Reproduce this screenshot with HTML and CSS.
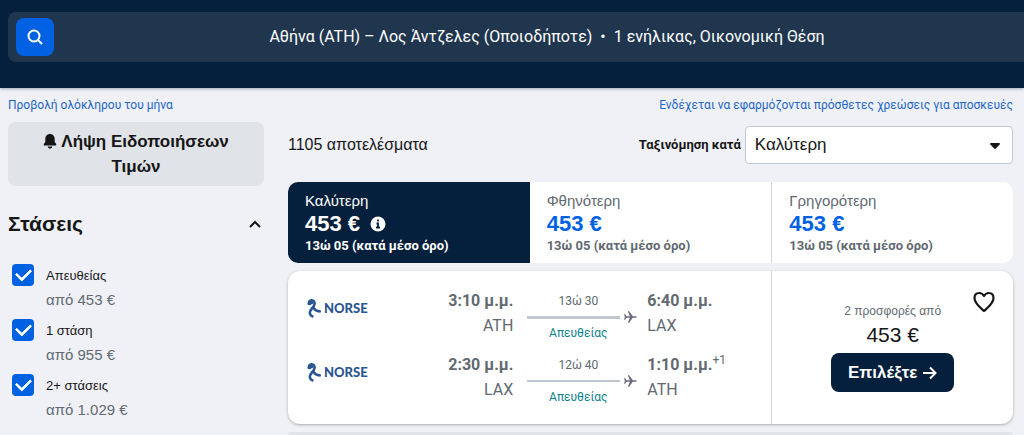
FILE: index.html
```html
<!DOCTYPE html>
<html lang="el">
<head>
<meta charset="utf-8">
<meta name="viewport" content="width=device-width, initial-scale=1">
<title>Αθήνα – Λος Άντζελες</title>
<link rel="stylesheet" href="styles.css">
</head>
<body>
<svg class="sprite" aria-hidden="true">
  <symbol id="plane" viewBox="0 0 14 14"><path d="M1 4.200h1L3.600 6.300h3.300L4.800 1.200h1.300l3.700 5.100h2.600c.8 0 1.200.4 1.200.7s-.4.700-1.200.7H9.800l-3.700 5.100H4.800l2.100-5.100H3.600L2 9.800H1L1.900 7z"/></symbol>
  <symbol id="norse" viewBox="0 0 14 19"><path d="M1.800 4.800C1.500 2 4 1 5.700 1.500c2.300.8 2.200 3.200 1.200 5.300C5.500 9.500 2.600 11 2.800 14c.1 1.700 1.200 2.700 2.600 3.400M2 5c1.400.2 1.800-1 2.800-1M6.300 8.700c1.300 2.200 3.400 3.700 6.500 3.700" fill="none" stroke="currentColor" stroke-width="2.600" stroke-linecap="round"/></symbol>
</svg>
<header class="header">
  <div class="search">
    <button class="search-button" type="button" aria-label="Αναζήτηση">
      <svg width="16" height="16" viewBox="0 0 16 16" fill="none" stroke="currentColor" stroke-width="2"><circle cx="7" cy="7" r="5.500"/><path d="M11 11l4 4"/></svg>
    </button>
    <p class="search-text">Αθήνα (ATH) – Λος Άντζελες (Οποιοδήποτε) <span class="dot">•</span> 1 ενήλικας, Οικονομική Θέση</p>
  </div>
</header>
<nav class="links">
  <a href="#month">Προβολή ολόκληρου του μήνα</a>
  <a href="#baggage">Ενδέχεται να εφαρμόζονται πρόσθετες χρεώσεις για αποσκευές</a>
</nav>
<div class="page">
  <aside class="sidebar">
    <button class="alerts" type="button"><svg class="bell" width="14" height="16" viewBox="0 0 14 16"><path fill="currentColor" d="M7 1C4 1 2.300 3.300 2.300 6v3L.8 11v1.500h12.400V11l-1.500-2V6C11.700 3.300 10 1 7 1zM4.700 13.500C5 15 6 15.500 7 15.500S9 15 9.300 13.500z"/></svg> Λήψη Ειδοποιήσεων Τιμών</button>
    <section class="filter">
      <h2 class="filter-title">Στάσεις
        <button class="collapse" type="button" aria-label="Σύμπτυξη"><svg width="12" height="8" viewBox="0 0 12 8" fill="none" stroke="currentColor" stroke-width="2"><path d="M1 7l5-5 5 5"/></svg></button>
      </h2>
      <label class="option"><input type="checkbox" checked><span class="option-name">Απευθείας</span><span class="option-price">από 453 €</span></label>
      <label class="option"><input type="checkbox" checked><span class="option-name">1 στάση</span><span class="option-price">από 955 €</span></label>
      <label class="option"><input type="checkbox" checked><span class="option-name">2+ στάσεις</span><span class="option-price">από 1.029 €</span></label>
    </section>
  </aside>
  <main class="results">
    <div class="toolbar">
      <p class="count">1105 αποτελέσματα</p>
      <label class="sort-label" for="sort">Ταξινόμηση κατά</label>
      <div class="sort">
        <select id="sort"><option>Καλύτερη</option><option>Φθηνότερη</option><option>Γρηγορότερη</option></select>
        <svg class="caret" width="12" height="8" viewBox="0 0 12 8"><path fill="currentColor" d="M2 1h8c1 0 1.300.9.700 1.500L6.800 6.600c-.5.500-1.100.500-1.600 0L1.300 2.500C.7 1.900 1 1 2 1z"/></svg>
      </div>
    </div>
    <div class="tabs">
      <button class="tab tab-active" type="button"><span class="tab-name">Καλύτερη</span><span class="tab-price">453 € <svg width="16" height="16" viewBox="0 0 16 16"><circle cx="8" cy="8" r="7.500" fill="currentColor"/><path d="M8 3.500v2M6.500 7.500H8V11M6 11.500h4" fill="none" stroke="#05203c" stroke-width="1.800"/></svg></span><span class="tab-time">13ώ 05 (κατά μέσο όρο)</span></button>
      <button class="tab" type="button"><span class="tab-name">Φθηνότερη</span><span class="tab-price">453 €</span><span class="tab-time">13ώ 05 (κατά μέσο όρο)</span></button>
      <button class="tab" type="button"><span class="tab-name">Γρηγορότερη</span><span class="tab-price">453 €</span><span class="tab-time">13ώ 05 (κατά μέσο όρο)</span></button>
    </div>
    <article class="card">
      <div class="legs">
        <div class="leg">
          <div class="airline"><svg width="14" height="19"><use href="#norse"/></svg>NORSE</div>
          <div class="stop depart"><span class="time">3:10 μ.μ.</span><span class="code">ATH</span></div>
          <div class="route"><span class="duration">13ώ 30</span><span class="track track-wide"></span><svg class="plane" width="14" height="14"><use href="#plane"/></svg><span class="direct">Απευθείας</span></div>
          <div class="stop"><span class="time">6:40 μ.μ.</span><span class="code">LAX</span></div>
        </div>
        <div class="leg">
          <div class="airline"><svg width="14" height="19"><use href="#norse"/></svg>NORSE</div>
          <div class="stop depart"><span class="time">2:30 μ.μ.</span><span class="code">LAX</span></div>
          <div class="route"><span class="duration">12ώ 40</span><span class="track"></span><svg class="plane" width="14" height="14"><use href="#plane"/></svg><span class="direct">Απευθείας</span></div>
          <div class="stop"><span class="time">1:10 μ.μ.<sup>+1</sup></span><span class="code">ATH</span></div>
        </div>
      </div>
      <div class="offer">
        <button class="save" type="button" aria-label="Αποθήκευση"><svg width="24" height="22" viewBox="0 0 24 22"><path d="M12 20C9.500 17.700 2.500 12.500 2.500 7.300 2.500 4 4.500 2 7.200 2c2.200 0 3.800 1.300 4.800 3 1-1.700 2.600-3 4.800-3 2.700 0 4.700 2 4.700 5.300C21.500 12.500 14.500 17.700 12 20z" fill="none" stroke="currentColor" stroke-width="2.200" stroke-linejoin="round"/></svg></button>
        <span class="offer-note">2 προσφορές από</span>
        <span class="offer-price">453 €</span>
        <button class="select" type="button">Επιλέξτε <svg width="14" height="14" viewBox="0 0 14 14" fill="none" stroke="currentColor" stroke-width="2"><path d="M0 7h12M7 1.500L12.500 7 7 12.500"/></svg></button>
      </div>
    </article>
    <article class="card next-card"></article>
  </main>
</div>
</body>
</html>
```
FILE: styles.css
```css
* { box-sizing: border-box; }
body {
  display: flex;
  flex-direction: column;
  margin: 0;
  min-height: 100vh;
  background: #eff1f6;
  color: #161616;
  font: 16px/24px "Liberation Sans", Arial, sans-serif;
}
p, h2 { margin: 0; }
button { border: 0; padding: 0; background: none; color: inherit; font: inherit; cursor: pointer; }
svg { display: block; flex: none; }
.sprite { position: absolute; width: 0; height: 0; }

.header { background: #05203c; padding: 12px 0 26px 8px; box-shadow: 0 1px 3px #05203c55; }
.search {
  display: flex;
  align-items: center;
  height: 50px;
  padding: 0 8px;
  border-radius: 8px 0 0 8px;
  background: #1f364e;
  color: #fff;
}
.search-button {
  display: grid;
  place-items: center;
  width: 38px;
  height: 38px;
  border-radius: 8px;
  background: #0062e3;
}
.search-text { flex: 1; padding-left: 24px; text-align: center; font-family: Roboto, sans-serif; font-size: 16px; }
.dot { margin: 0 4px; }

.links { display: flex; justify-content: space-between; padding: 8px 11px 0 8px; font-family: Roboto, sans-serif; font-size: 12px; line-height: 18px; }
.links a { color: #1d66c4; text-decoration: none; }

.page { flex: 1; display: grid; grid-template-columns: 256px 1fr; gap: 24px; padding: 8px 11px 0 8px; }

.alerts { width: 100%; padding: 7px 24px; border-radius: 8px; background: #e0e3e8; font-weight: bold; font-size: 17px; line-height: 25px; }
.bell { display: inline-block; vertical-align: -2px; }
.filter { padding-top: 24px; }
.filter-title { display: flex; justify-content: space-between; align-items: center; margin-bottom: 26px; padding-right: 3px; font-size: 21px; line-height: 28px; }
.option { display: grid; grid-template-columns: 22px 1fr; column-gap: 12px; padding-left: 4px; margin-bottom: 8px; }
.option:last-child { margin-bottom: 0; }
.option input {
  appearance: none;
  display: grid;
  place-items: center;
  width: 22px;
  height: 22px;
  margin: 0;
  border-radius: 4px;
  background: #0062e3;
}
.option input:checked::after {
  content: "";
  width: 12px;
  height: 7px;
  margin-bottom: 4px;
  border: solid #fff;
  border-width: 0 0 3px 3px;
  border-radius: 1px;
  transform: rotate(-45deg);
}
.option-name { font-size: 13px; }
.option-price { grid-column: 2; font-size: 15px; line-height: 23px; color: #626971; }

.results { display: flex; flex-direction: column; }
.toolbar { display: flex; align-items: center; padding-top: 4px; }
.count { flex: 1; }
.sort-label { margin-right: 4px; font-family: Roboto, sans-serif; font-size: 13px; font-weight: bold; }
.sort { position: relative; flex: 0 0 37%; }
.sort select {
  appearance: none;
  display: block;
  width: 100%;
  height: 38px;
  padding: 0 9px;
  border: 1px solid #c1c7cf;
  border-radius: 4px;
  background: #fff;
  color: #161616;
  font: inherit;
  font-size: 17px;
}
.caret { position: absolute; top: 16px; right: 12px; pointer-events: none; }

.tabs { display: grid; grid-template-columns: repeat(3, 1fr); margin-top: 18px; border-radius: 10px; overflow: hidden; background: #fff; }
.tab { display: flex; flex-direction: column; padding: 8px 17px; text-align: left; color: #626971; }
.tab + .tab + .tab { border-left: 1px solid #d4d8de; }
.tab-name { font-size: 15px; line-height: 22px; }
.tab-price { display: flex; align-items: center; gap: 10px; color: #0062e3; font-size: 22px; font-weight: bold; line-height: 24px; }
.tab-time { font-family: Roboto, sans-serif; font-size: 13px; font-weight: bold; line-height: 19px; }
.tab-active { background: #05203c; }
.tab-active, .tab-active .tab-price { color: #fff; }

.card { display: grid; grid-template-columns: 2fr 1fr; margin-top: 8px; border-radius: 12px; background: #fff; box-shadow: 0 1px 3px #25201f55; }
.legs { display: grid; gap: 14px; padding: 17px 0 22px 19px; }
.leg { display: grid; grid-template-columns: 61px 1fr 110px 134px; height: 50px; color: #626971; }
.airline { display: flex; align-items: center; gap: 3px; margin-top: 11px; align-self: start; color: #2a5591; font: 900 13px/19px Lato, sans-serif; }
.stop { display: flex; flex-direction: column; padding-left: 10px; font-family: Roboto, sans-serif; line-height: 25px; }
.depart { padding: 0 14px 0 0; text-align: right; }
.time { font-weight: bold; }
.time sup { font-size: 12px; font-weight: normal; line-height: 0; }
.route { display: grid; grid-template-columns: 1fr 14px; column-gap: 3px; align-items: center; font-size: 12px; text-align: center; font-family: Roboto, sans-serif; }
.duration, .direct { grid-column: 1 / 3; line-height: 18px; padding-right: 8px; }
.duration { padding-top: 4px; }
.track { height: 2px; background: #c1c7cf; }
.track-wide { height: 3px; }
.plane { fill: #68697f; }
.direct { color: #0c838a; }
.offer { position: relative; display: flex; flex-direction: column; align-items: center; padding: 30px 0 16px; border-left: 1px solid #d4d8de; }
.save { position: absolute; top: 20px; right: 17px; }
.offer-note { font-size: 12px; line-height: 20px; color: #626971; }
.offer-price { font-size: 21px; line-height: 28px; }
.select { display: flex; align-items: center; gap: 6px; height: 39px; margin-top: 4px; padding: 0 17px; border-radius: 8px; background: #05203c; color: #fff; font-size: 17px; font-weight: bold; }
.next-card { flex: 1; border-radius: 12px 12px 0 0; background: #e0e3e8; box-shadow: none; }
```
